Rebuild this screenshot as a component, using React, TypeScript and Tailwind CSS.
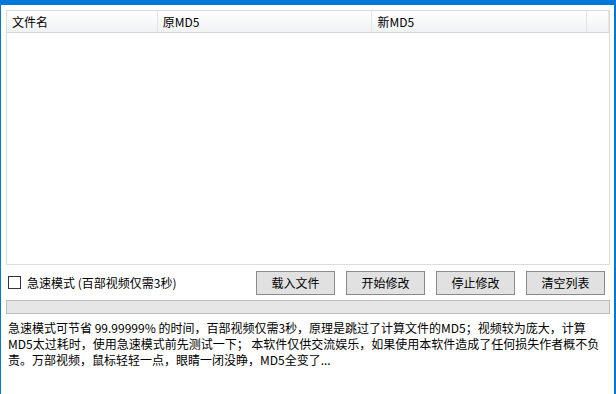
import { ReactNode } from "react";

const font = "font-['Microsoft_YaHei','Noto_Sans_CJK_SC',sans-serif]";

const columns = [
  { label: "文件名", width: "w-[151px]" },
  { label: "原MD5", width: "w-[215px]" },
  { label: "新MD5", width: "w-[215px]" },
];

const buttons = ["载入文件", "开始修改", "停止修改", "清空列表"];

const notice = [
  "急速模式可节省 99.99999% 的时间，百部视频仅需3秒，原理是跳过了计算文件的MD5；视频较为庞大，计算",
  "MD5太过耗时，使用急速模式前先测试一下； 本软件仅供交流娱乐，如果使用本软件造成了任何损失作者概不负",
  "责。万部视频，鼠标轻轻一点，眼睛一闭没睁，MD5全变了...",
];

function HeaderCell({ children, width }: { children?: ReactNode; width: string }) {
  return (
    <div className={`${width} flex h-full items-center border-r border-[#e5e5e5] pl-[5px] text-[12px] text-black`}>
      {children}
    </div>
  );
}

function WinButton({ label }: { label: string }) {
  return (
    <button className="flex h-[24px] w-[79px] items-center justify-center border border-[#8a8a8a] bg-[#e1e1e1] text-[12px] text-black">
      {label}
    </button>
  );
}

export default function App() {
  return (
    <div
      className={`${font} flex h-[394px] w-[616px] flex-col border-t-[5px] border-r-[2px] border-l border-[#0078d7] bg-white`}
    >
      {/* list view */}
      <div className="mt-[5px] ml-[5px] flex h-[255px] w-[604px] flex-col border border-[#dcdcdc] bg-white">
        <div className="flex h-[22px] border-b border-[#d5d5d5] bg-gradient-to-b from-white to-[#f1f2f4]">
          {columns.map((c) => (
            <HeaderCell key={c.label} width={c.width}>
              {c.label}
            </HeaderCell>
          ))}
          <HeaderCell width="w-[22px]" />
        </div>
      </div>

      {/* options + buttons */}
      <div className="mt-[5px] flex h-[25px] items-center pr-[9px]">
        <div className="ml-[7px] flex items-center gap-[6px]">
          <span className="h-[13px] w-[13px] border border-[#333333] bg-white" />
          <span className="text-[12px] text-black">急速模式 (百部视频仅需3秒)</span>
        </div>
        <div className="ml-auto flex gap-[11px]">
          {buttons.map((b) => (
            <WinButton key={b} label={b} />
          ))}
        </div>
      </div>

      {/* progress */}
      <div className="mt-[5px] ml-[5px] h-[14px] w-[604px] border border-[#bcbcbc] bg-[#e6e6e6]" />

      {/* notice */}
      <div className="mt-[6px] ml-[7px] text-[12px] leading-[16px] whitespace-nowrap text-black">
        {notice.map((line) => (
          <div key={line}>{line}</div>
        ))}
      </div>
    </div>
  );
}
